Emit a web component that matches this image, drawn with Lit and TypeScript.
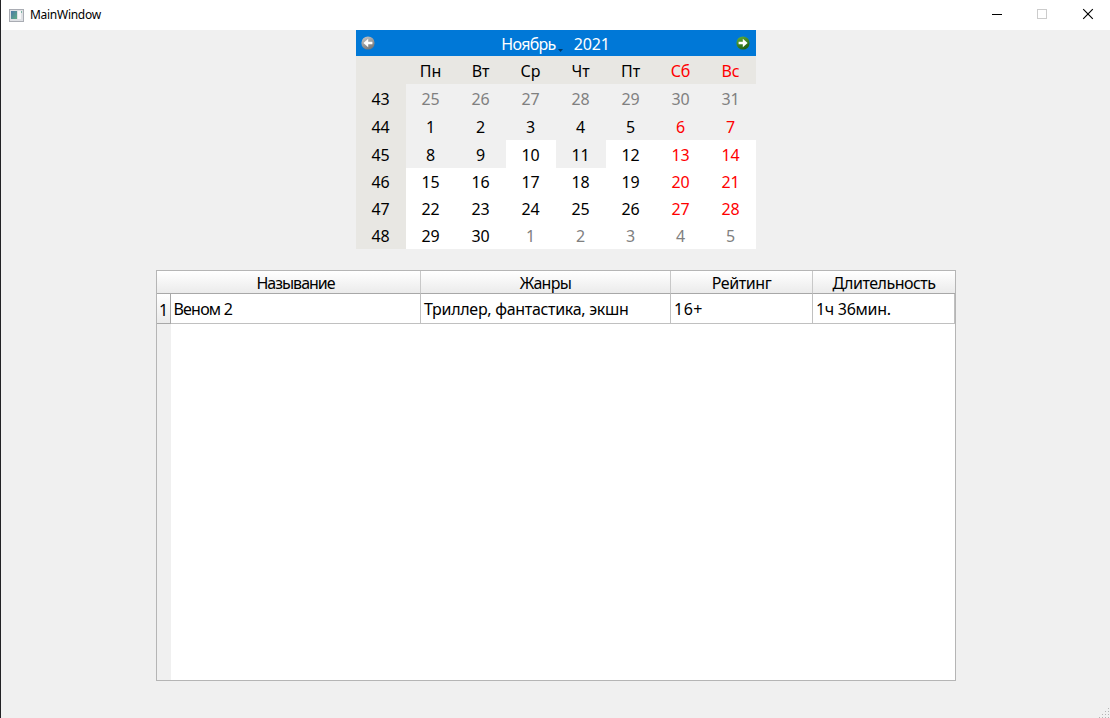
import { LitElement, html, css, svg } from "lit";
import { customElement } from "lit/decorators.js";
import { classMap } from "lit/directives/class-map.js";

const DAYS = ["Пн", "Вт", "Ср", "Чт", "Пт", "Сб", "Вс"];

interface Week {
  num: number;
  days: number[];
}

const WEEKS: Week[] = [
  { num: 43, days: [25, 26, 27, 28, 29, 30, 31] },
  { num: 44, days: [1, 2, 3, 4, 5, 6, 7] },
  { num: 45, days: [8, 9, 10, 11, 12, 13, 14] },
  { num: 46, days: [15, 16, 17, 18, 19, 20, 21] },
  { num: 47, days: [22, 23, 24, 25, 26, 27, 28] },
  { num: 48, days: [29, 30, 1, 2, 3, 4, 5] },
];

const isOther = (w: number, d: number) => w === 0 || (w === 5 && d > 1);
const isOpen = (w: number, d: number) => w > 2 || (w === 2 && (d === 2 || d > 3));

@customElement("title-bar")
class TitleBar extends LitElement {
  static styles = css`
    :host {
      display: flex;
      height: 30px;
      background: #fff;
      align-items: center;
      font: 12px/16px "Noto Sans", "Open Sans", sans-serif;
      color: #000;
    }
    .icon { display: block; margin-left: 8px; }
    .name { flex: 1; padding-left: 6px; letter-spacing: -0.28px; }
    .buttons { display: block; }
  `;
  render() {
    return html`
      <svg class="icon" width="15" height="13" viewBox="0 0 15 13" shape-rendering="crispEdges">
        <defs>
          <linearGradient id="pane" x1="0" y1="0" x2="1" y2="1">
            <stop offset="0" stop-color="#4a78a8" />
            <stop offset="1" stop-color="#5fae84" />
          </linearGradient>
        </defs>
        <rect width="15" height="13" fill="#a9acb3" />
        <rect x="1" y="1" width="13" height="11" fill="#dfe1e5" />
        <rect x="2" y="2" width="6" height="8" fill="url(#pane)" />
        <rect x="9" y="2" width="3" height="8" fill="#f6f7f8" />
        <rect x="12" y="2" width="1" height="2" fill="#7fb3a4" />
      </svg>
      <span class="name">MainWindow</span>
      <svg class="buttons" width="136" height="30" viewBox="974 0 136 30">
        <path d="M992 14.5h10" stroke="#000" />
        <rect x="1037.5" y="9.5" width="9" height="9" fill="none" stroke="#ccc" />
        <path d="M1083.2 9.2l9.6 9.6M1092.8 9.2l-9.6 9.6" stroke="#000" stroke-width="1.15" />
      </svg>
    `;
  }
}

@customElement("month-calendar")
class MonthCalendar extends LitElement {
  static styles = css`
    :host {
      display: block;
      width: 400px;
      font: 16px/20px "Noto Sans", "Open Sans", sans-serif;
      color: #000;
    }
    .nav {
      display: flex;
      height: 26px;
      background: #0078d7;
      color: #fff;
      align-items: center;
    }
    .arrow { display: block; flex: none; }
    .prev { margin-left: 4px; }
    .next { margin-right: 5px; }
    .label { flex: 1; display: flex; justify-content: center; line-height: 26px; padding-top: 1px; }
    .month { letter-spacing: -0.7px; }
    .drop { display: block; align-self: flex-end; margin: 0 11px 5px 2px; }
    .year { letter-spacing: -0.15px; }
    .grid {
      display: grid;
      grid-template-columns: repeat(8, 50px);
      grid-template-rows: repeat(4, 28px) repeat(3, 27px);
      background: #f0f0f0;
    }
    .cell {
      display: flex;
      align-items: center;
      justify-content: center;
      letter-spacing: -0.1px;
      padding: 2px 1px 0 0;
    }
    .low { padding-top: 0; }
    .head { background: #e8e7e3; }
    .open { background: #fff; }
    .weekend { color: #f00; }
    .other { color: #808080; }
  `;
  private arrow(kind: string) {
    const next = kind === "next";
    const hi = next ? "#5fae3c" : "#c4c4c4";
    const lo = next ? "#1d5c10" : "#737373";
    const ball = `ball-${kind}`;
    return html`<svg class="arrow ${kind}" width="16" height="16" viewBox="0 0 16 16">
      <defs>
        <linearGradient id=${ball} x1="0.2" y1="0" x2="0.7" y2="1">
          <stop offset="0" stop-color=${hi} />
          <stop offset="1" stop-color=${lo} />
        </linearGradient>
      </defs>
      <circle cx="8" cy="8" r="6.6" fill="url(#${ball})" />
      ${next
        ? svg`<path d="M3.6 6.8h4.2V3.7L12.6 8l-4.8 4.3V9.2H3.6z" fill="#fff" />`
        : svg`<path d="M12.4 6.8H8.2V3.7L3.4 8l4.8 4.3V9.2h4.2z" fill="#fff" />`}
    </svg>`;
  }
  render() {
    return html`
      <div class="nav">
        ${this.arrow("prev")}
        <div class="label">
          <span class="month">Ноябрь</span>
          <svg class="drop" width="5" height="3" viewBox="0 0 5 3"><path d="M0 0h5L2.5 3z" fill="#003a68" /></svg>
          <span class="year">2021</span>
        </div>
        ${this.arrow("next")}
      </div>
      <div class="grid">
        <div class="cell head"></div>
        ${DAYS.map((d, i) => html`<div class=${classMap({ cell: true, head: true, weekend: i > 4 })}>${d}</div>`)}
        ${WEEKS.map(
          (week, w) => html`
            <div class=${classMap({ cell: true, head: true, low: w > 2 })}>${week.num}</div>
            ${week.days.map(
              (n, d) => html`<div
                class=${classMap({
                  cell: true,
                  low: w > 2,
                  open: isOpen(w, d),
                  other: isOther(w, d),
                  weekend: d > 4 && !isOther(w, d),
                })}
              >${n}</div>`
            )}
          `
        )}
      </div>
    `;
  }
}

@customElement("film-table")
class FilmTable extends LitElement {
  static styles = css`
    :host {
      display: grid;
      box-sizing: border-box;
      width: 800px;
      height: 411px;
      border: 1px solid #b5b5b5;
      background: #fff;
      grid-template-columns: 14px 250px 250px 142px 142px;
      grid-template-rows: 23px 30px 1fr;
      font: 16px/20px "Noto Sans", "Open Sans", sans-serif;
      color: #000;
    }
    .head {
      display: flex;
      align-items: center;
      justify-content: center;
      box-sizing: border-box;
      border-right: 1px solid #c8c8c8;
      border-bottom: 1px solid #a8a8a8;
      background: linear-gradient(#fff, #ebebeb);
      padding-top: 2px;
      letter-spacing: -0.4px;
    }
    .first { grid-column: span 2; padding-left: 14px; letter-spacing: -1px; }
    .genre { letter-spacing: -0.7px; }
    .last { border-right: 0; letter-spacing: -0.5px; }
    .num { border-color: #a8a8a8; letter-spacing: 0; padding-top: 2px; }
    .cell {
      display: flex;
      align-items: center;
      box-sizing: border-box;
      border-right: 1px solid #c0c0c0;
      border-bottom: 1px solid #c0c0c0;
      padding: 0 0 0 3px;
      letter-spacing: -0.3px;
      white-space: pre;
    }
    .title { padding-left: 2.5px; letter-spacing: -0.8px; }
    .rating { letter-spacing: 0.5px; }
    .gutter { background: #f0f0f0; }
  `;
  render() {
    return html`
      <div class="head first">Называние</div>
      <div class="head genre">Жанры</div>
      <div class="head">Рейтинг</div>
      <div class="head last">Длительность</div>
      <div class="head num">1</div>
      <div class="cell title">Веном 2</div>
      <div class="cell">Триллер, фантастика, экшн</div>
      <div class="cell rating">16+</div>
      <div class="cell">1ч 36мин.</div>
      <div class="gutter"></div>
    `;
  }
}

@customElement("app-root")
class AppRoot extends LitElement {
  static styles = css`
    :host {
      display: flex;
      flex-direction: column;
      box-sizing: border-box;
      width: 1110px;
      height: 718px;
      border-left: 1px solid #222225;
      background: #f0f0f0;
      overflow: hidden;
    }
    .body { flex: 1; display: flex; flex-direction: column; padding-left: 155px; }
    .calendar { margin: 0 0 21px 200px; }
    .grip { display: block; margin: auto 0 0 auto; }
  `;
  render() {
    const dots: [number, number][] = [];
    for (let r = 0; r < 4; r++) for (let c = 3 - r; c < 4; c++) dots.push([c * 3, r * 3]);
    return html`
      <title-bar></title-bar>
      <div class="body">
        <month-calendar class="calendar"></month-calendar>
        <film-table></film-table>
        <svg class="grip" width="11" height="10" viewBox="0 0 11 10" shape-rendering="crispEdges">
          ${dots.map(([x, y]) => svg`<rect x=${x} y=${y} width="1" height="1" fill="#b4b4b4" />`)}
        </svg>
      </div>
    `;
  }
}
